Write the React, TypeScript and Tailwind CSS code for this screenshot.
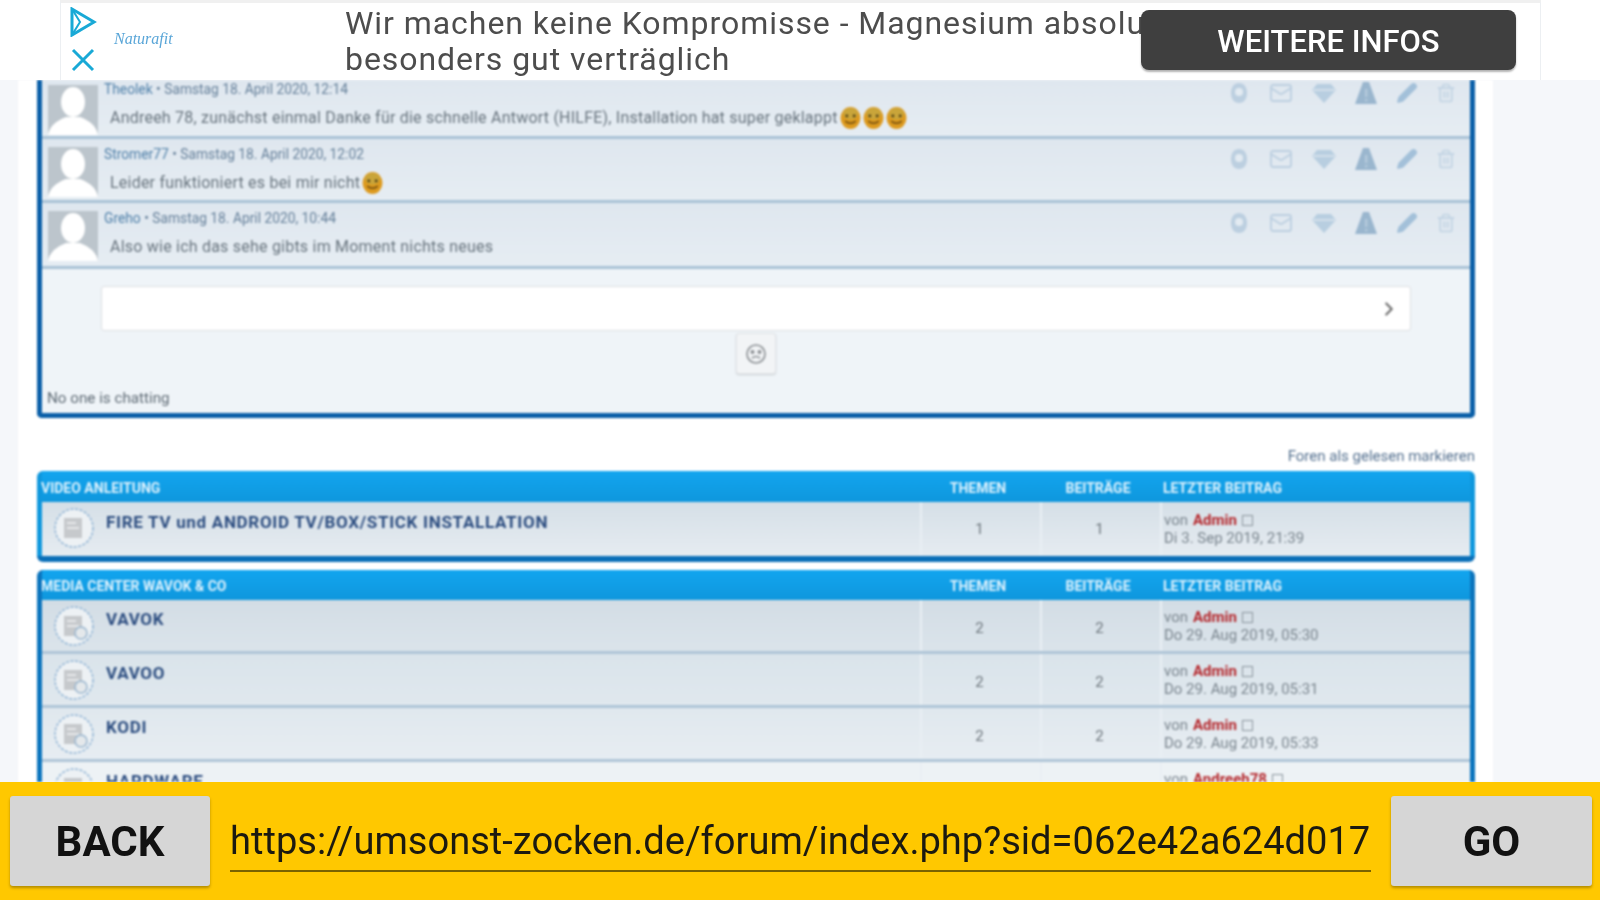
import { Mail, Pencil, Trash2, ChevronRight } from 'lucide-react'

function Smiley() {
  return (
    <svg width="21" height="24" viewBox="0 0 20 22" className="shrink-0">
      <ellipse cx="10" cy="11" rx="9.5" ry="10.5" fill="#dd9a1e" />
      <ellipse cx="10" cy="7" rx="7" ry="5.5" fill="#c9a53a" />
      <circle cx="6.5" cy="9" r="1.3" fill="#4a3a10" />
      <circle cx="13.5" cy="9" r="1.3" fill="#4a3a10" />
      <path d="M5 14 Q10 18 15 14" stroke="#6b4a10" strokeWidth="1.4" fill="none" />
    </svg>
  )
}

function Avatar() {
  return (
    <svg viewBox="0 0 50 50" className="w-[50px] h-[50px] shrink-0" preserveAspectRatio="none">
      <rect width="50" height="50" fill="#bcc5cc" />
      <ellipse cx="25" cy="17" rx="12" ry="15" fill="#ffffff" />
      <path d="M0 50 Q2 38 18 32 L32 32 Q48 38 50 50 Z" fill="#ffffff" />
    </svg>
  )
}

function ChatRow({ who, when, text, smileys = 0, h, avatarTop = false }: { who: string; when: string; text: string; smileys?: number; h: string; avatarTop?: boolean }) {
  return (
    <div className={`${h} flex border-b-[3px] border-[#a9c2d6] bg-gradient-to-b from-[#dfe7ef] to-[#e6edf3] pl-[6px] pr-[14px] overflow-hidden ${avatarTop ? 'items-end pb-[1px]' : 'items-start pt-[8px]'}`}>
      <Avatar />
      <div className={`flex-1 pl-[6px] ${avatarTop ? 'self-start' : '-mt-[2px]'}`}>
        <div className="h-[18px] text-[13.8px] leading-[18px] text-[#647f99]">
          <span className="text-[#4e7fa8]">{who}</span> • {when}
        </div>
        <div className="mt-[10px] pl-[6px] flex items-center h-[20px] text-[16px] tracking-[0.22px] text-[#68747e] whitespace-nowrap">
          <span>{text}</span>
          {Array.from({ length: smileys }, (_, i) => (
            <span key={i} className="ml-[2px]"><Smiley /></span>
          ))}
        </div>
      </div>
      <div className={`flex items-center gap-[18px] self-start ${avatarTop ? 'pt-[1px]' : ''}`}>
        <svg width="22" height="24" viewBox="0 0 22 24" className="text-[#bccfe0]">
          <path d="M11 2 C16 2 19 6 19 12 C19 18 16 22 11 22 C6 22 3 18 3 12 C3 6 6 2 11 2 Z" fill="currentColor" />
          <circle cx="11" cy="11" r="4" fill="#e3ebf2" />
        </svg>
        <Mail className="w-[26px] h-[24px] text-[#bccfe0]" strokeWidth={1.8} />
        <svg width="24" height="22" viewBox="0 0 24 22" className="text-[#b8cee0]">
          <path d="M5 2 H19 L24 8 L12 21 L0 8 Z" fill="currentColor" />
          <path d="M1 8 H23" stroke="#dfe8f0" strokeWidth="1.4" />
        </svg>
        <svg width="24" height="24" viewBox="0 0 24 24" className="text-[#9ab6ce]">
          <path d="M12 1 L15 1 L23 23 H1 L9 1 Z" fill="currentColor" />
          <rect x="11" y="8" width="2.4" height="8" fill="#b5cadc" />
          <rect x="11" y="18" width="2.4" height="2.4" fill="#b5cadc" />
        </svg>
        <Pencil className="w-[22px] h-[22px] text-[#a3c0d9]" fill="#a3c0d9" strokeWidth={1.6} />
        <Trash2 className="w-[20px] h-[24px] text-[#c4d5e4]" strokeWidth={2.2} />
      </div>
    </div>
  )
}

function ForumIcon({ plain = false }: { plain?: boolean }) {
  return (
    <svg width="40" height="40" viewBox="0 0 40 40" className="shrink-0">
      <circle cx="20" cy="20" r="19" fill="#edf1f4" stroke="#8fb3d4" strokeWidth="1.5" strokeDasharray="3 1.5" />
      <rect x="10" y="10" width="18" height="20" fill="#c6c9cc" />
      <rect x="13" y="14" width="9" height="2" fill="#e6e8ea" />
      <rect x="13" y="19" width="12" height="2" fill="#e6e8ea" />
      {!plain && <circle cx="27" cy="27" r="6" fill="#e4e8eb" stroke="#9ab6cf" strokeWidth="1.5" />}
    </svg>
  )
}

function ForumRow({ title, n, by = 'Admin', date, bg, plain = false, sep = true, tight = true }: { title: string; n: number | string; by?: string; date: string; bg: string; plain?: boolean; sep?: boolean; tight?: boolean }) {
  const numCls = `flex items-center justify-center pr-[3px] border-l-2 border-[#e9eff4] text-[15px] text-[#6c757c] ${tight ? 'pt-[5px]' : ''}`
  return (
    <div className={`h-[54px] shrink-0 grid grid-cols-[878px_120px_120px_1fr] ${bg} ${sep ? 'border-b-[3px] border-[#afc5d7]' : ''}`}>
      <div className="flex pl-[12px] pt-[6px] gap-[12px]">
        <ForumIcon plain={plain} />
        <span className={`text-[17px] font-bold leading-[20px] tracking-[0.7px] text-[#2c4d80] whitespace-nowrap ${tight ? 'pt-[3px]' : 'pt-[4px]'}`}>{title}</span>
      </div>
      <div className={numCls}>{n}</div>
      <div className={numCls}>{n}</div>
      <div className={`border-l-2 border-[#e9eff4] pl-[2px] text-[15px] leading-[18px] text-[#7a858e] ${tight ? 'pt-[8px]' : 'pt-[9px]'}`}>
        <div className="flex items-center gap-[5px]">
          <span>von</span>
          <span className="font-bold text-[#b5292e]">{by}</span>
          <span className="w-[11px] h-[11px] border border-[#8b959d] inline-block" />
        </div>
        <div className="whitespace-nowrap">{date}</div>
      </div>
    </div>
  )
}

function ForumHead({ title, h }: { title: string; h: string }) {
  return (
    <div className={`${h} shrink-0 grid grid-cols-[878px_120px_120px_1fr] items-center pt-[3px] text-[14px] font-bold text-[#dff2fd] bg-gradient-to-b from-[#12a5ef] to-[#0f97dd]`}>
      <span className="uppercase -ml-[1px]">{title}</span>
      <span className="text-center pr-[4px]">THEMEN</span>
      <span className="text-center pr-[4px]">BEITRÄGE</span>
      <span className="pl-[3px]">LETZTER BEITRAG</span>
    </div>
  )
}

export default function App() {
  return (
    <div className="h-screen w-full overflow-hidden flex flex-col bg-[#f5f7fa] font-['Roboto',sans-serif]">
      {/* ad banner */}
      <div className="h-[80px] shrink-0 bg-white pl-[60px] pr-[59px] z-10">
        <div className="h-[80px] border-x border-[#eceff2] border-t-[3px] border-t-[#f0f0f0] flex items-start overflow-hidden blur-[0.5px]">
          <div className="w-[44px] flex flex-col items-center pt-[4px] gap-[11px] shrink-0">
            <svg width="28" height="30" viewBox="0 0 28 30" fill="none" stroke="#19a9d6" strokeWidth="3">
              <path d="M3 2 L25 15 L3 28 Z" />
              <path d="M3 2 L11 15 L3 28" strokeWidth="2" />
            </svg>
            <svg width="24" height="24" viewBox="0 0 24 24" stroke="#19a9d6" strokeWidth="3">
              <path d="M2 2 L22 22 M22 2 L2 22" />
            </svg>
          </div>
          <div className="w-[240px] shrink-0 pt-[24px] pl-[9px] text-[16px] italic font-['Liberation_Serif',serif] text-[#5aa6d8]">Naturafit</div>
          <div className="flex-1 min-w-0 pt-[2px] text-[32px] leading-[36px] text-[#4d4d4d] tracking-[0.95px] whitespace-nowrap overflow-hidden">
            <div>Wir machen keine Kompromisse - Magnesium absolut</div>
            <div>besonders gut verträglich</div>
          </div>
          <div className="ml-[-1px] mr-[24px] mt-[7px] w-[375px] h-[60px] pt-[5px] shrink-0 rounded-[8px] bg-[#3f3f3f] shadow-[0_2px_2px_rgba(0,0,0,0.3)] flex items-center justify-center text-[31px] font-medium text-white">
            WEITERE INFOS
          </div>
        </div>
      </div>

      {/* forum page */}
      <div className="flex-1 min-h-0 overflow-hidden pl-[18px] pr-[107px]">
        <div className="h-full bg-white pl-[19px] pr-[18px] flex flex-col blur-[0.9px]">
          <div className="shrink-0 border-x-[5px] border-b-[5px] border-[#0a5fa8] rounded-b-[5px] flex flex-col bg-[#eff4f8]">
            <ChatRow who="Theolek" when="Samstag 18. April 2020, 12:14" text="Andreeh 78, zunächst einmal Danke für die schnelle Antwort (HILFE), Installation hat super geklappt" smileys={3} h="h-[59px]" avatarTop />
            <ChatRow who="Stromer77" when="Samstag 18. April 2020, 12:02" text="Leider funktioniert es bei mir nicht" smileys={1} h="h-[64px]" />
            <ChatRow who="Greho" when="Samstag 18. April 2020, 10:44" text="Also wie ich das sehe gibts im Moment nichts neues" h="h-[66px]" />
            <div className="h-[144px] flex flex-col">
              <div className="mt-[17px] mx-[59px] h-[45px] shrink-0 rounded-[3px] border border-[#dcdfe2] bg-white flex items-center justify-end pr-[10px]">
                <ChevronRight className="w-[22px] h-[22px] text-[#6f6f6f]" strokeWidth={2.4} />
              </div>
              <div className="mt-[2px] self-center w-[40px] h-[41px] shrink-0 rounded-[3px] bg-[#f2f4f6] border border-[#e1e4e7] shadow-[0_1px_2px_rgba(0,0,0,0.15)] flex items-center justify-center">
                <svg width="22" height="22" viewBox="0 0 22 22" fill="none" stroke="#8b8f93" strokeWidth="1.6">
                  <circle cx="11" cy="11" r="9" />
                  <circle cx="7.5" cy="9" r="1.2" fill="#8b8f93" />
                  <circle cx="14.5" cy="9" r="1.2" fill="#8b8f93" />
                  <path d="M7 15 Q11 12 15 15" />
                </svg>
              </div>
              <div className="mt-[16px] pl-[5px] text-[15.2px] leading-[16px] text-[#5f6b75]">No one is chatting</div>
            </div>
          </div>

          <div className="h-[53px] shrink-0 flex items-end justify-end pb-[7px] text-[15px] leading-[16px] text-[#54708f]">
            Foren als gelesen markieren
          </div>

          <div className="shrink-0 rounded-[6px] bg-[#0f97dd] border-b-[6px] border-[#0a6fb8] px-[5px] flex flex-col">
            <ForumHead title="Video Anleitung" h="h-[31px]" />
            <ForumRow title="FIRE TV und ANDROID TV/BOX/STICK INSTALLATION" n={1} date="Di 3. Sep 2019, 21:39" bg="bg-gradient-to-b from-[#d5dfe7] to-[#e6ecf1]" plain sep={false} tight={false} />
          </div>

          <div className="mt-[8px] flex-1 min-h-0 overflow-hidden rounded-t-[6px] bg-[#0f97dd] border-x-[5px] border-[#0b74bd] flex flex-col">
            <ForumHead title="Media Center Wavok & Co" h="h-[30px]" />
            <ForumRow title="VAVOK" n={2} date="Do 29. Aug 2019, 05:30" bg="bg-gradient-to-b from-[#d3dde5] to-[#dbe4eb]" />
            <ForumRow title="VAVOO" n={2} date="Do 29. Aug 2019, 05:31" bg="bg-gradient-to-b from-[#dae4eb] to-[#e0e8ee]" />
            <ForumRow title="KODI" n={2} date="Do 29. Aug 2019, 05:33" bg="bg-gradient-to-b from-[#e0e8ee] to-[#e7edf2]" />
            <ForumRow title="HARDWARE" n={2} by="Andreeh78" date="Do 29. Aug 2019, 05:35" bg="bg-[#edf2f5]" sep={false} />
          </div>
        </div>
      </div>

      {/* url bar */}
      <div className="h-[118px] shrink-0 bg-[#ffc800] flex items-start pt-[14px] pl-[10px] pr-[8px] z-10">
        <button className="w-[200px] h-[90px] rounded-[3px] bg-[#d6d6d6] shadow-[0_2px_3px_rgba(0,0,0,0.3)] text-[42px] font-bold text-[#111] blur-[0.4px]">
          BACK
        </button>
        <div className="flex-1 min-w-0 mx-[20px] h-[76px] pt-[15px] border-b-2 border-[#7a6200] text-[38.1px] leading-[60px] text-[#1c1a10] whitespace-nowrap overflow-hidden blur-[0.4px]">
          https://umsonst-zocken.de/forum/index.php?sid=062e42a624d017
        </div>
        <button className="w-[201px] h-[90px] rounded-[3px] bg-[#d6d6d6] shadow-[0_2px_3px_rgba(0,0,0,0.3)] text-[42px] font-bold text-[#111] blur-[0.4px]">
          GO
        </button>
      </div>
    </div>
  )
}
